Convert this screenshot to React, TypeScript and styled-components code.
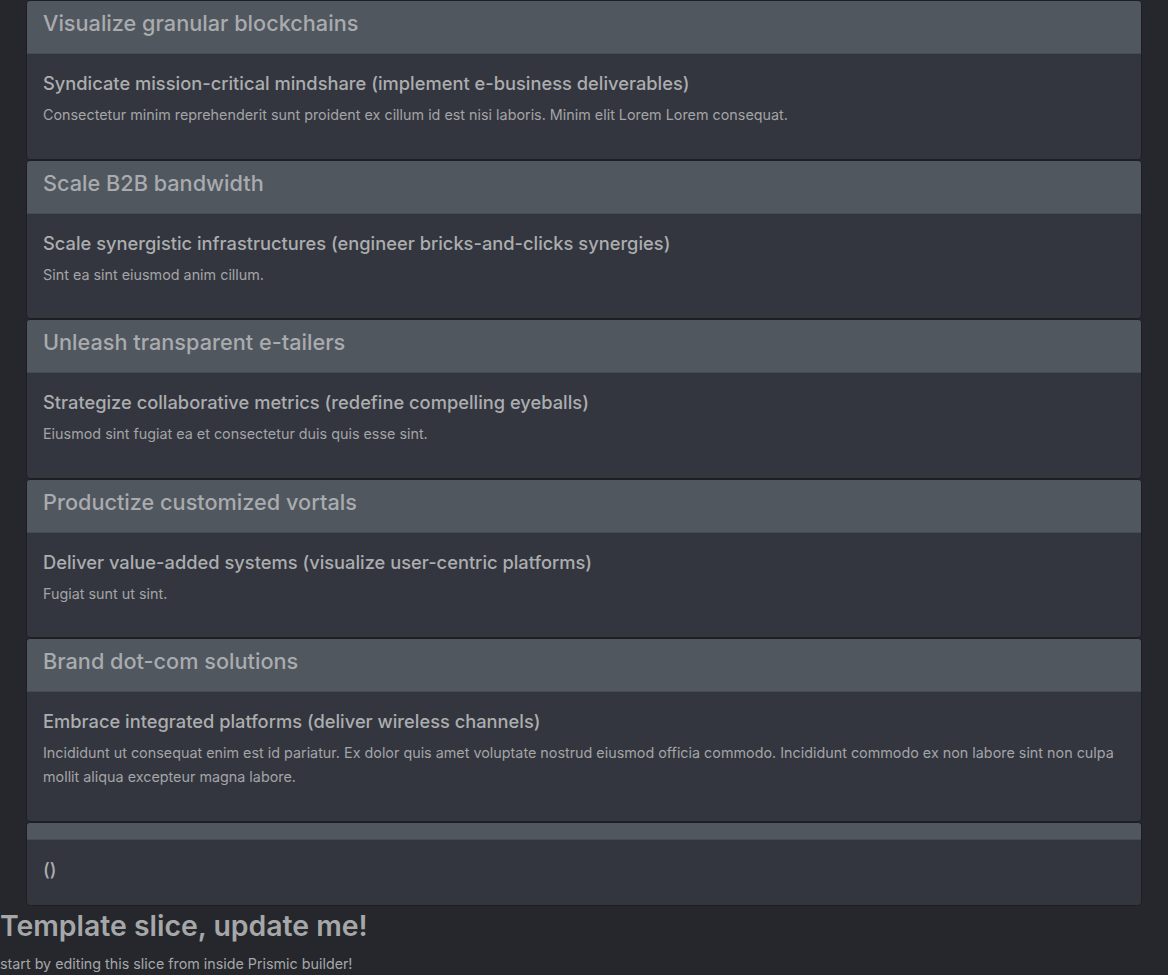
import React, { FC } from "react";
import styled, { createGlobalStyle } from "styled-components";

const GlobalStyle = createGlobalStyle`
  body {
    margin: 0;
    background: #25272c;
    font-family: Inter, "Noto Sans", "Liberation Sans", sans-serif;
    color: #a8a9ab;
  }
`;

const Page = styled.div`
  display: flex;
  flex-direction: column;
`;

const CardList = styled.div`
  display: flex;
  flex-direction: column;
  margin: 0 26px;
`;

const Card = styled.section`
  display: flex;
  flex-direction: column;
  background: #33363e;
  border: 1px solid #1d1f23;
  border-radius: 4px;
  overflow: hidden;
`;

const CardHeader = styled.header`
  background: #50575f;
  border-bottom: 1px solid #464c54;
  padding: 8px 16px;
`;

const HeaderTitle = styled.h3`
  margin: 0 0 7px;
  font-size: 21.7px;
  line-height: 29px;
  font-weight: 500;
  color: #a9abae;
`;

const CardBody = styled.div`
  padding: 16px;
`;

const CardTitle = styled.h5`
  margin: 0 0 7px;
  font-size: 18.3px;
  line-height: 26px;
  font-weight: 500;
  color: #acadaf;
`;

const CardText = styled.p`
  margin: 0 0 15.5px;
  font-size: 14.35px;
  line-height: 24px;
  color: #a3a4a7;
`;

const SliceTitle = styled.h1`
  margin: 0;
  font-size: 28.4px;
  line-height: 40px;
  font-weight: 600;
  color: #a6a7a9;
`;

const SliceText = styled.p`
  margin: 6px 0 0;
  font-size: 14.3px;
  line-height: 24px;
  color: #a6a7a9;
`;

interface IItem {
  heading: string;
  title: string;
  text?: string;
}

const items: IItem[] = [
  {
    heading: "Visualize granular blockchains",
    title: "Syndicate mission-critical mindshare (implement e-business deliverables)",
    text: "Consectetur minim reprehenderit sunt proident ex cillum id est nisi laboris. Minim elit Lorem Lorem consequat.",
  },
  {
    heading: "Scale B2B bandwidth",
    title: "Scale synergistic infrastructures (engineer bricks-and-clicks synergies)",
    text: "Sint ea sint eiusmod anim cillum.",
  },
  {
    heading: "Unleash transparent e-tailers",
    title: "Strategize collaborative metrics (redefine compelling eyeballs)",
    text: "Eiusmod sint fugiat ea et consectetur duis quis esse sint.",
  },
  {
    heading: "Productize customized vortals",
    title: "Deliver value-added systems (visualize user-centric platforms)",
    text: "Fugiat sunt ut sint.",
  },
  {
    heading: "Brand dot-com solutions",
    title: "Embrace integrated platforms (deliver wireless channels)",
    text: "Incididunt ut consequat enim est id pariatur. Ex dolor quis amet voluptate nostrud eiusmod officia commodo. Incididunt commodo ex non labore sint non culpa mollit aliqua excepteur magna labore.",
  },
  { heading: "", title: "()" },
];

const ItemCard: FC<IItem> = ({ heading, title, text }) => (
  <Card>
    <CardHeader>{heading && <HeaderTitle>{heading}</HeaderTitle>}</CardHeader>
    <CardBody>
      <CardTitle>{title}</CardTitle>
      {text && <CardText>{text}</CardText>}
    </CardBody>
  </Card>
);

const App: FC = () => {
  return (
    <Page>
      <GlobalStyle />
      <CardList>
        {items.map((item, i) => (
          <ItemCard key={i} {...item} />
        ))}
      </CardList>
      <SliceTitle>Template slice, update me!</SliceTitle>
      <SliceText>start by editing this slice from inside Prismic builder!</SliceText>
    </Page>
  );
};

export default App;
